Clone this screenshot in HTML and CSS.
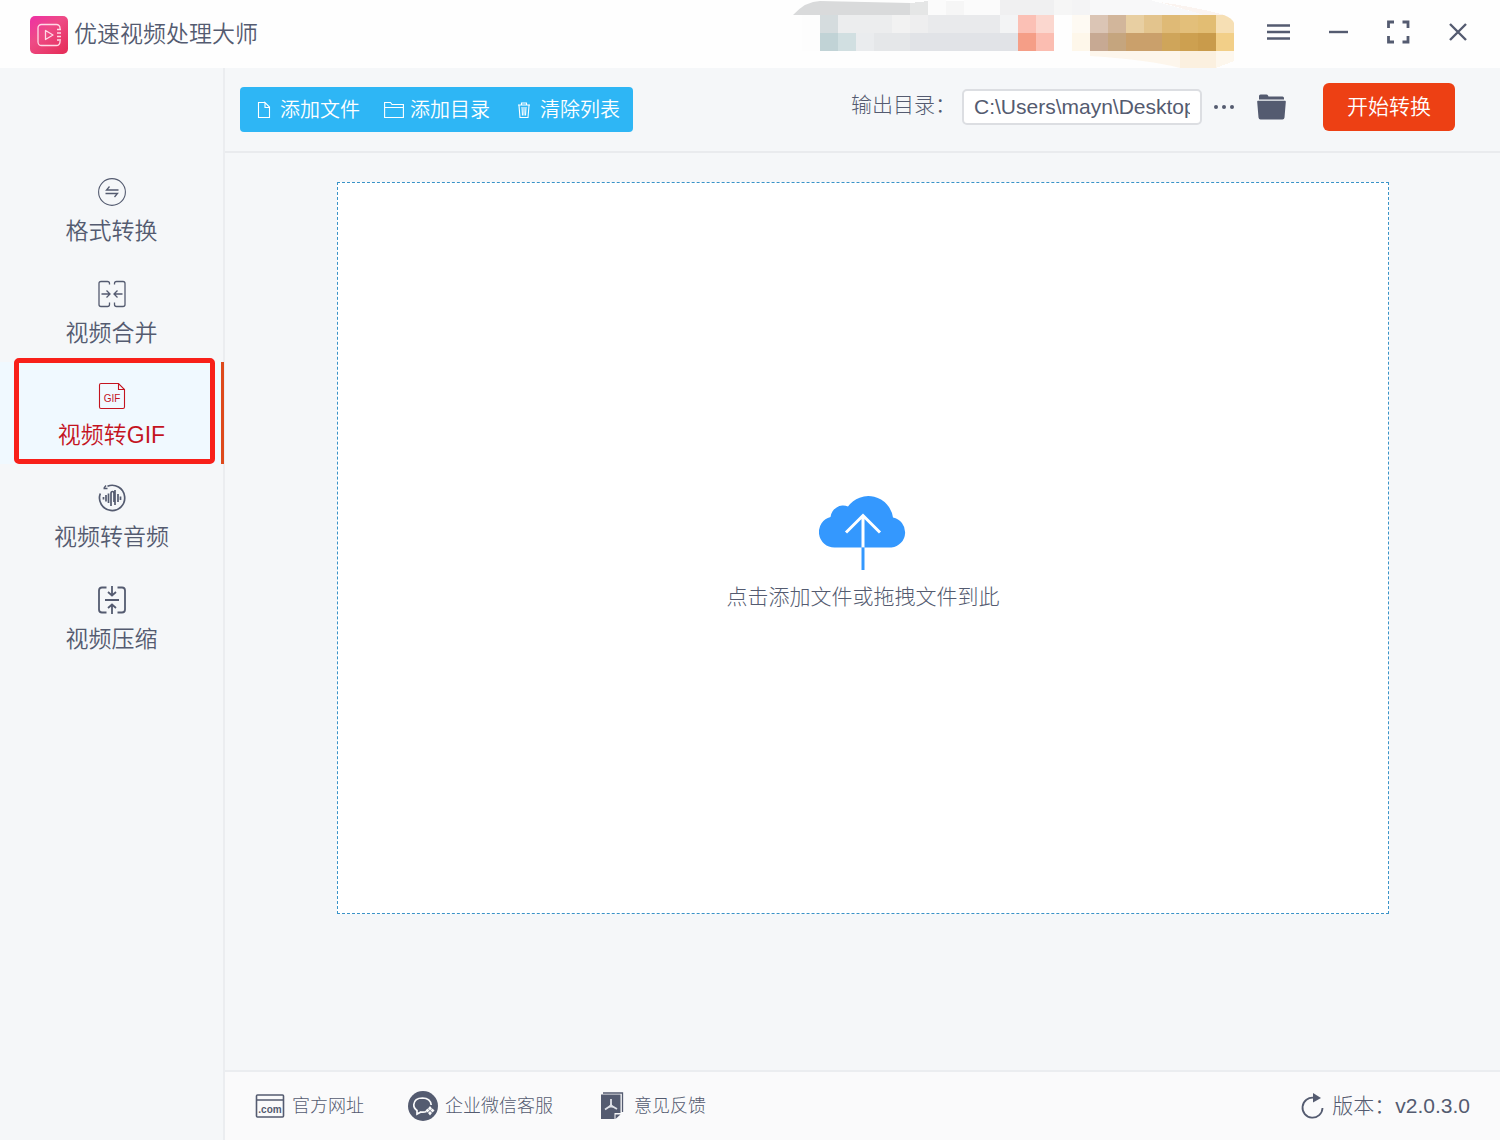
FILE: index.html
```html
<!DOCTYPE html>
<html lang="zh-CN">
<head>
    <meta charset="UTF-8">
    <meta name="viewport" content="width=device-width, initial-scale=1.0">
    <title>优速视频处理大师</title>
    <link rel="stylesheet" href="styles.css">
</head>
<body>
    <header class="header">
        <svg class="logo" width="38" height="38" viewBox="0 0 38 38">
            <defs>
                <linearGradient id="logoBg" x1="0" y1="0" x2="0.8" y2="1">
                    <stop offset="0" stop-color="#ee2fa6"/>
                    <stop offset="0.45" stop-color="#ee4b86"/>
                    <stop offset="1" stop-color="#e6305c"/>
                </linearGradient>
            </defs>
            <rect width="38" height="38" rx="5" fill="url(#logoBg)"/>
            <g fill="none" stroke="#ffd9e6" stroke-width="1.3">
                <path d="M30 13v-1a3.500 3.500 0 0 0-3.500-3.500h-15A3.500 3.500 0 0 0 8 12v14a3.500 3.500 0 0 0 3.500 3.500h15A3.500 3.500 0 0 0 30 26v-1"/>
                <path d="M15.500 14.500v9l7.500-4.500z" stroke-linejoin="round"/>
                <path d="M27 13.500h4M27 17h4M27 20.500h4M27 24h4"/>
            </g>
        </svg>
        <h1 class="title">优速视频处理大师</h1>
        <svg class="mosaic" width="468" height="68" viewBox="784 0 468 68" shape-rendering="crispEdges" aria-hidden="true">
            <path d="M793 15Q806 1 820 1L910 3V15z" fill="#d9dadb" shape-rendering="auto"/>
            <path d="M910 3L928 1V15H910z" fill="#e5e6e6"/>
            <path d="M928 0h18v15h-18zM964 0h36v15h-36z" fill="#fbfbfb"/>
            <path d="M946 1h18v14h-18zM1054 0h18v15h-18z" fill="#f6f6f6"/>
            <path d="M1000 0h54v15h-54z" fill="#f0f0f1"/>
            <path d="M1072 0h18v15h-18z" fill="#f4f4f5"/>
            <path d="M1090 0H1150L1205 15H1090z" fill="#f8f8f9"/>
            <path d="M1160 2Q1200 8 1225 15H1204z" fill="#fbf4f0"/>
            <path d="M802 15h18v36h-18z" fill="#fdfdfd"/>
            <path d="M820 15h18v18h-18z" fill="#d5dcde"/>
            <path d="M838 15h54v18h-54z" fill="#ecedee"/>
            <path d="M892 15h18v18h-18z" fill="#f2f2f2"/>
            <path d="M910 15h18v18h-18z" fill="#eeeeef"/>
            <path d="M928 15h72v18h-72z" fill="#e9eaec"/>
            <path d="M1000 15h18v18h-18z" fill="#f3f4f5"/>
            <path d="M1018 15h18v18h-18z" fill="#fbc0b5"/>
            <path d="M1036 15h18v18h-18z" fill="#fbd7cf"/>
            <path d="M1072 15h18v18h-18z" fill="#fefaf3"/>
            <path d="M1090 15h18v18h-18z" fill="#dbc5b5"/>
            <path d="M1108 15h18v18h-18z" fill="#d2b69b"/>
            <path d="M1126 15h18v18h-18z" fill="#e8cfa2"/>
            <path d="M1144 15h18v18h-18z" fill="#e3c48d"/>
            <path d="M1162 15h18v18h-18z" fill="#dfba76"/>
            <path d="M1180 15h18v18h-18z" fill="#e3bf7a"/>
            <path d="M1198 15h18v18h-18z" fill="#e2bd73"/>
            <path d="M1216 15h8q8 3 10 8v10h-18z" fill="#f6dfb4" shape-rendering="auto"/>
            <path d="M820 33h18v18h-18z" fill="#c1d3d6"/>
            <path d="M838 33h18v18h-18z" fill="#d1dfe1"/>
            <path d="M856 33h18v18h-18z" fill="#eaecee"/>
            <path d="M874 33h36v18h-36z" fill="#e5e7e9"/>
            <path d="M910 33h108v18h-108z" fill="#e1e3e7"/>
            <path d="M1018 33h18v18h-18z" fill="#f59e87"/>
            <path d="M1036 33h18v18h-18z" fill="#fbbdb1"/>
            <path d="M1072 33h18v18h-18z" fill="#fef7ea"/>
            <path d="M1090 33h18v18h-18z" fill="#c7a993"/>
            <path d="M1108 33h18v18h-18z" fill="#c5a57e"/>
            <path d="M1126 33h36v18h-36z" fill="#caa06b"/>
            <path d="M1162 33h18v18h-18z" fill="#cfa55a"/>
            <path d="M1180 33h18v18h-18z" fill="#cda050"/>
            <path d="M1198 33h18v18h-18z" fill="#c99b4b"/>
            <path d="M1216 33h18v18h-18z" fill="#f2cf88"/>
            <path d="M1090 51H1216V68H1180Q1150 60 1090 56z" fill="#fdf6ec" shape-rendering="auto"/>
            <path d="M1180 51h36v17h-36z" fill="#fbf0df"/>
            <path d="M1216 51h18v10l-18 7z" fill="#fdf7ed"/>
        </svg>
        <div class="window__btns">
            <button type="button" aria-label="菜单">
                <svg width="24" height="24" viewBox="0 0 24 24"><path d="M1 5.500h23M1 12h23M1 18.500h23" stroke="currentColor" stroke-width="2.4"/></svg>
            </button>
            <button type="button" aria-label="最小化">
                <svg width="24" height="24" viewBox="0 0 24 24"><path d="M3 12h19" stroke="currentColor" stroke-width="2.4"/></svg>
            </button>
            <button type="button" aria-label="最大化">
                <svg width="24" height="24" viewBox="0 0 24 24"><path d="M8 2H2.500V8M16.500 2H22V8M8 22H2.500V16M16.500 22H22V16" fill="none" stroke="currentColor" stroke-width="2.800"/></svg>
            </button>
            <button type="button" aria-label="关闭">
                <svg width="24" height="24" viewBox="0 0 24 24"><path d="M4 4L20 20M20 4L4 20" stroke="currentColor" stroke-width="2.400"/></svg>
            </button>
        </div>
    </header>

    <div class="wrap">
        <nav class="sidebar">
            <a href="#" class="menu__item">
                <svg width="28" height="28" viewBox="0 0 28 28" fill="none" stroke="currentColor">
                    <circle cx="14" cy="14" r="13.400" stroke-width="1.100"/>
                    <path d="M20.500 12H8.500L11.500 8.500M7.500 15.500H19.500L16.500 19" stroke-width="1.300"/>
                </svg>
                <span>格式转换</span>
            </a>
            <a href="#" class="menu__item">
                <svg width="28" height="28" viewBox="0 0 28 28" fill="none" stroke="currentColor" stroke-width="1.300">
                    <path d="M11.500 4.500V3.500Q11.500 1.500 9.500 1.500H3Q1 1.500 1 3.500V24.500Q1 26.500 3 26.500H9.500Q11.500 26.500 11.500 24.500V22.500M16.500 4.500V3.500Q16.500 1.500 18.500 1.500H25Q27 1.500 27 3.500V24.500Q27 26.500 25 26.500H18.500Q16.500 26.500 16.500 24.500V22.500"/>
                    <path d="M3.500 14H11.500M8.500 10.500L12 14L8.500 17.500M24.500 14H16.500M19.500 10.500L16 14L19.500 17.500"/>
                </svg>
                <span>视频合并</span>
            </a>
            <a href="#" class="menu__item active">
                <svg width="28" height="28" viewBox="0 0 28 28" fill="none" stroke="currentColor" stroke-width="1.100">
                    <path d="M20.500 1.500H3Q1.500 1.500 1.500 3V25Q1.500 26.500 3 26.500H25Q26.500 26.500 26.500 25V7.500zV7.500H26.500"/>
                    <text class="gif" x="14" y="20" text-anchor="middle">GIF</text>
                </svg>
                <span>视频转GIF</span>
            </a>
            <a href="#" class="menu__item">
                <svg width="28" height="28" viewBox="0 0 28 28" fill="none" stroke="currentColor">
                    <path d="M9.500 2.200A12.600 12.600 0 1 1 2.300 9.500" stroke-width="1.700"/>
                    <path d="M6 4L8 1.500M5.500 4.500H9.500" stroke-width="1.300"/>
                    <path d="M5.500 13V15.500M8 11V17.500M10.500 9.500V19M13 22V9.500Q13 7.500 14.500 7.500T16 9.500V18M17 6V21M20 10V18M22.500 12.500V16" stroke-width="1.700"/>
                </svg>
                <span>视频转音频</span>
            </a>
            <a href="#" class="menu__item">
                <svg width="28" height="28" viewBox="0 0 28 28" fill="none" stroke="currentColor" stroke-width="1.800">
                    <path d="M8.500 1.500H4Q1 1.500 1 4.500V23.500Q1 26.500 4 26.500H8.500M19.500 1.500H24Q27 1.500 27 4.500V23.500Q27 26.500 24 26.500H19.500"/>
                    <path d="M7 14H21M14 0V9M10 6L14 9.500L18 6M14 28V19M10 22L14 18.500L18 22"/>
                </svg>
                <span>视频压缩</span>
            </a>
        </nav>

        <div class="content">
            <div class="toolbar">
                <div class="file__btns">
                    <button type="button">
                        <svg width="20" height="20" viewBox="0 0 20 20" fill="none" stroke="currentColor" stroke-width="1.100">
                            <path d="M11 2.500H4.500V17.500H15.500V7L11 2.500V7.500H15.500"/>
                        </svg>
                        <span>添加文件</span>
                    </button>
                    <button type="button">
                        <svg width="20" height="20" viewBox="0 0 20 20" fill="none" stroke="currentColor" stroke-width="1.100">
                            <path d="M0.600 17.500V2.500H6.500L8 4.500H19.400V17.500zM0.600 7.500H19.400"/>
                        </svg>
                        <span>添加目录</span>
                    </button>
                    <button type="button">
                        <svg width="20" height="20" viewBox="0 0 20 20" fill="none" stroke="currentColor" stroke-width="1.100">
                            <path d="M4 5H16M7.500 5V3H12.500V5M5 5.500L6 17.500H14L15 5.500M8 7L8.500 15.500M10 7V15.500M12 7L11.500 15.500"/>
                        </svg>
                        <span>清除列表</span>
                    </button>
                </div>
                <div class="output">
                    <label for="path">输出目录：</label>
                    <input id="path" class="path" type="text" value="C:\Users\mayn\Desktop">
                    <button type="button" class="more" aria-label="选择目录">
                        <svg width="22" height="6" viewBox="0 0 22 6" fill="currentColor"><circle cx="3" cy="3" r="2"/><circle cx="11" cy="3" r="2"/><circle cx="19" cy="3" r="2"/></svg>
                    </button>
                    <button type="button" class="open" aria-label="打开目录">
                        <svg width="29" height="26" viewBox="0 0 29 26" fill="currentColor">
                            <path d="M2 5.500V2Q2 0.500 3.500 0.500H9.500Q10.500 0.500 11 1.500L11.500 2.500H25.500Q27 2.500 27 4V5.500z"/>
                            <path d="M1 6.800H28Q29 6.800 28.800 8L27.500 23.500Q27.300 25.500 25.500 25.500H3.500Q1.700 25.500 1.500 23.500L0.200 8Q0 6.800 1 6.800z"/>
                        </svg>
                    </button>
                    <button type="button" class="start">开始转换</button>
                </div>
            </div>

            <main class="main">
                <button type="button" class="drop">
                    <svg width="88" height="75" viewBox="0 0 88 75">
                        <path d="M15.500 52.500A15.500 15.500 0 0 1 11.500 22A12.800 12.800 0 0 1 29 11.500A25 25 0 0 1 74 22.500A15.200 15.200 0 0 1 72.500 52.500z" fill="#3498fe"/>
                        <path d="M44 52.500V21M27 37.500L44 20.500L61 37.500" fill="none" stroke="#fff" stroke-width="3"/>
                        <path d="M44 52.500V75" stroke="#3498fe" stroke-width="3"/>
                    </svg>
                    <span>点击添加文件或拖拽文件到此</span>
                </button>
            </main>

            <footer class="footer">
                <a href="#">
                    <svg width="30" height="30" viewBox="0 0 30 30">
                        <path d="M1.500 5Q1.500 4 2.500 4H27.500Q28.500 4 28.500 5V25Q28.500 26 27.500 26H2.500Q1.500 26 1.500 25zM1.500 9H28.500" fill="none" stroke="currentColor" stroke-width="1.600"/>
                        <text class="com" x="15" y="22" text-anchor="middle">.com</text>
                    </svg>
                    <span>官方网址</span>
                </a>
                <a href="#">
                    <svg width="30" height="30" viewBox="0 0 30 30">
                        <circle cx="15" cy="15" r="15" fill="currentColor"/>
                        <path d="M18.500 20.500Q16 21.500 13 21L9 23V19.500Q5.500 17 5.800 13.500Q6.500 7 14.500 7Q22.500 7.300 23.200 14" fill="none" stroke="#fafafb" stroke-width="1.700"/>
                        <path d="M22 15l2 2.500-2 2-2-2zM22 20l2 2-2 2.500-2-2.500zM19.500 17.500l2 2-2 2-2-2zM24.500 17.500l2 2-2 2-2-2z" fill="#fafafb"/>
                    </svg>
                    <span>企业微信客服</span>
                </a>
                <a href="#">
                    <svg width="30" height="30" viewBox="0 0 30 30">
                        <path d="M6 2H25.500V21" fill="none" stroke="currentColor" stroke-width="1.300"/>
                        <path d="M4 3.500H23.500V22H17.500V28H4z" fill="currentColor"/>
                        <path d="M18.500 28V23.500H23.500z" fill="currentColor"/>
                        <path d="M14 8V14.500L8 18.500M14 14.500L20 18" fill="none" stroke="#dfe1e8" stroke-width="1.800"/>
                        <path d="M14 12l2.500 4.500h-5z" fill="#dfe1e8"/>
                    </svg>
                    <span>意见反馈</span>
                </a>
                <button type="button" class="version">
                    <svg width="24" height="26" viewBox="0 0 24 26">
                        <path d="M13 4.800A10 10 0 1 0 21.500 15" fill="none" stroke="currentColor" stroke-width="1.800"/>
                        <path d="M12 0V9.500L20 5z" fill="currentColor"/>
                    </svg>
                    <span>版本：v2.0.3.0</span>
                </button>
            </footer>
        </div>
    </div>
</body>
</html>
```
FILE: styles.css
```css
* {
    box-sizing: border-box;
}
body {
    display: flex;
    flex-direction: column;
    margin: 0;
    min-height: 100vh;
    background-color: #f5f7f9;
    color: #545b70;
    font-family: "Liberation Sans", "Noto Sans CJK SC", sans-serif;
    font-size: 21px;
    font-weight: 300;
    line-height: 30px;
}
a {
    color: inherit;
    text-decoration: none;
}
button {
    padding: 0;
    border: 0;
    background: none;
    color: inherit;
    font: inherit;
    cursor: pointer;
}
svg {
    display: block;
    flex: none;
}

/* 標題列 */
.header {
    display: flex;
    align-items: center;
    height: 68px;
    padding: 2px 30px 0;
    background-color: #fefefe;
}
.title {
    margin: 0 0 2px 6px;
    font-size: 23px;
    font-weight: 350;
}
.mosaic {
    align-self: flex-end;
    margin-left: auto;
}
.window__btns {
    display: flex;
    gap: 36px;
    margin-left: 14px;
    padding-bottom: 6px;
}

/* 側邊選單 */
.wrap {
    display: flex;
    flex: 1;
}
.sidebar {
    flex: 0 0 225px;
    padding-top: 90px;
    border-right: 2px solid #ebedf0;
}
.menu__item {
    display: flex;
    flex-direction: column;
    align-items: center;
    gap: 10px;
    position: relative;
    padding: 20px 0 14px;
    font-size: 23px;
    font-weight: 350;
}
.menu__item.active {
    background-color: #f0f9ff;
    color: #c4141f;
}
.menu__item.active::before {
    content: "";
    position: absolute;
    top: -4px;
    right: 8px;
    bottom: 0;
    left: 14px;
    border: 5px solid #f8201a;
    border-radius: 5px;
}
.menu__item.active::after {
    content: "";
    position: absolute;
    top: 0;
    right: -1px;
    bottom: 0;
    width: 3px;
    background-color: #de4a1c;
}
.gif {
    fill: currentColor;
    stroke: none;
    font-size: 10px;
}

/* 工具列 */
.content {
    display: flex;
    flex: 1;
    flex-direction: column;
    min-width: 0;
}
.toolbar {
    display: flex;
    align-items: center;
    justify-content: space-between;
    height: 85px;
    padding: 0 45px 0 15px;
    border-bottom: 2px solid #e9ebee;
}
.file__btns {
    display: flex;
    gap: 24px;
    height: 45px;
    padding: 1px 13px 0 14px;
    border-radius: 4px;
    background-color: #2eb6f5;
    color: #fff;
    font-size: 20px;
    font-weight: 350;
}
.file__btns button {
    display: flex;
    align-items: center;
    gap: 6px;
}
.output {
    display: flex;
    align-items: center;
    padding-bottom: 5px;
}
.output label {
    padding-bottom: 4px;
}
.path {
    width: 240px;
    height: 36px;
    margin: 0 11px 0 6px;
    padding: 0 10px;
    border: 2px solid #dcdee2;
    border-radius: 5px;
    background-color: #fff;
    color: inherit;
    font: inherit;
}
.more {
    margin-right: 22px;
}
.open {
    margin-right: 37px;
}
.start {
    width: 132px;
    height: 48px;
    border-radius: 6px;
    background-color: #ed4014;
    color: #fff;
    font-weight: 350;
}

/* 拖曳區 */
.main {
    display: flex;
    flex: 1;
    padding: 29px 111px 156px 112px;
}
.drop {
    display: flex;
    flex: 1;
    flex-direction: column;
    align-items: center;
    justify-content: center;
    gap: 12px;
    padding-top: 11px;
    border: 1px dashed #3a93c8;
    background-color: #fff;
}

/* 頁尾 */
.footer {
    display: flex;
    align-items: center;
    gap: 44px;
    height: 70px;
    padding: 0 30px;
    border-top: 2px solid #ebedf0;
    background-color: #fafafb;
    font-size: 18px;
}
.footer a,
.version {
    display: flex;
    align-items: center;
    gap: 7px;
}
.version {
    margin-left: auto;
    font-size: 21px;
}
.com {
    fill: currentColor;
    font-size: 10px;
    font-weight: bold;
}
```
